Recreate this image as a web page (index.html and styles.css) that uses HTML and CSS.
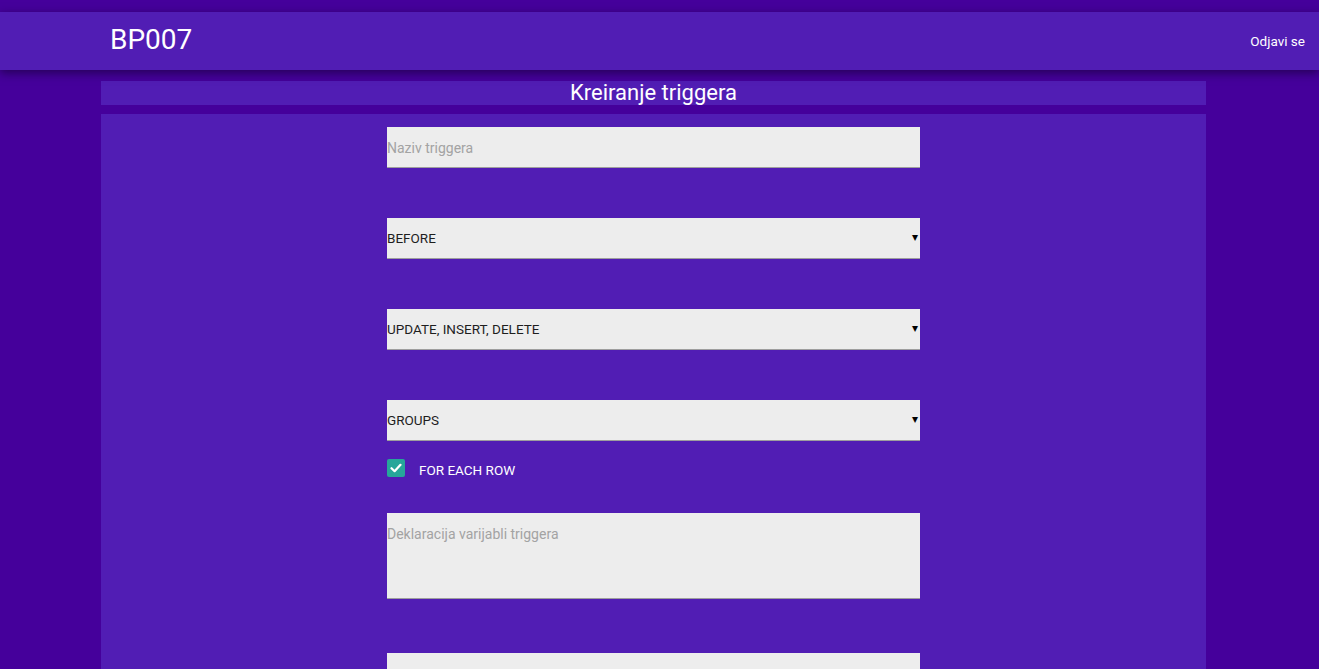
FILE: index.html
```html
<!DOCTYPE html>
<html>
<head>
<meta charset="utf-8">
<title>BP007</title>
<link rel="stylesheet" href="styles.css">
</head>
<body>
<div class="topgap"></div>
<nav class="navbar">
  <a class="brand">BP007</a>
  <a class="logout">Odjavi se</a>
</nav>
<div class="container">
  <div class="title-bar">Kreiranje triggera</div>
  <div class="panel">
    <form class="form">
      <input class="field" type="text" placeholder="Naziv triggera">
      <div class="select-wrap">
        <select class="field select"><option>BEFORE</option><option>AFTER</option></select>
        <span class="arrow">▾</span>
      </div>
      <div class="select-wrap">
        <select class="field select"><option>UPDATE, INSERT, DELETE</option></select>
        <span class="arrow">▾</span>
      </div>
      <div class="select-wrap last">
        <select class="field select"><option>GROUPS</option></select>
        <span class="arrow">▾</span>
      </div>
      <label class="check">
        <span class="box"><svg width="12" height="10" viewBox="0 0 12 10"><path d="M1.5 5.2 L4.6 8.2 L10.5 1.8" fill="none" stroke="#fff" stroke-width="2.2" stroke-linecap="round" stroke-linejoin="round"/></svg></span>
        <span class="check-label">FOR EACH ROW</span>
      </label>
      <textarea class="field area" placeholder="Deklaracija varijabli triggera"></textarea>
      <textarea class="field area" placeholder=""></textarea>
    </form>
  </div>
</div>
</body>
</html>
```
FILE: styles.css
```css
html, body {
  margin: 0;
  padding: 0;
  height: 100%;
  overflow: hidden;
}
body {
  background: #45009b;
  font-family: Roboto, "Noto Sans", sans-serif;
  color: #fff;
}
.topgap {
  height: 12px;
}
.navbar {
  position: relative;
  z-index: 2;
  height: 58px;
  background: #511db4;
  box-shadow: 0 3px 9px rgba(20, 0, 50, 0.65);
  display: flex;
  align-items: center;
  justify-content: space-between;
  padding: 0 14px 0 110px;
}
.brand {
  font-size: 28px;
  color: #fff;
  line-height: 1;
  margin-top: -2px;
}
.logout {
  font-size: 13.5px;
  color: #fff;
  margin-top: -1px;
}
.container {
  margin: 11px 0 0 101px;
  width: 1105px;
}
.title-bar {
  background: #511db4;
  height: 24px;
  line-height: 24px;
  text-align: center;
  font-size: 22px;
}
.panel {
  background: #511db4;
  margin-top: 9px;
  padding-top: 13px;
  height: 700px;
}
.form {
  width: 533px;
  margin: 0 auto;
  display: flex;
  flex-direction: column;
}
.field {
  display: block;
  box-sizing: border-box;
  width: 533px;
  height: 41px;
  margin: 0;
  padding: 0;
  border: none;
  border-bottom: 1px solid #9e9e9e;
  border-radius: 0;
  background: #ededed;
  font-family: Roboto, "Noto Sans", sans-serif;
  font-size: 14px;
  color: #222;
  outline: none;
}
.field::placeholder {
  color: #a3a3a3;
}
input.field {
  padding-top: 2px;
}
.form > .field:first-child {
  margin-bottom: 50px;
}
.select-wrap {
  position: relative;
  margin-bottom: 50px;
}
.select-wrap.last {
  margin-bottom: 0;
}
.select {
  appearance: none;
  -webkit-appearance: none;
  font-size: 13.5px;
  color: #1e1e1e;
  padding-left: 0;
}
.arrow {
  position: absolute;
  right: 2px;
  top: 12px;
  font-size: 12px;
  color: #000;
  pointer-events: none;
}
.check {
  display: flex;
  align-items: center;
  height: 18px;
  margin-top: 18px;
}
.box {
  width: 18px;
  height: 18px;
  background: #26a69a;
  border-radius: 2px;
  display: flex;
  align-items: center;
  justify-content: center;
}
.check-label {
  margin-left: 14px;
  font-size: 13.5px;
  color: #fff;
  margin-top: 4px;
}
.area {
  height: 86px;
  margin-top: 36px;
  resize: none;
  padding-top: 14px;
  line-height: 14px;
}
.area + .area {
  margin-top: 54px;
}
```
